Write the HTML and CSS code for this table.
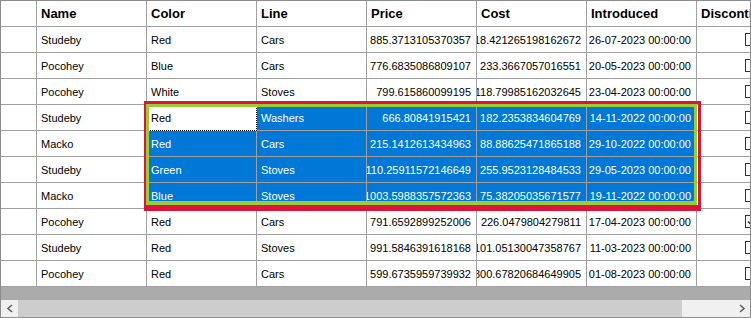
FILE: index.html
```html
<!DOCTYPE html>
<html>
<head>
<meta charset="utf-8">
<link rel="stylesheet" href="styles.css">
</head>
<body>
<div class="dgv">
  <div class="grid">
    <div class="row hdr">
      <div class="c rh"></div>
      <div class="c">Name</div>
      <div class="c">Color</div>
      <div class="c">Line</div>
      <div class="c">Price</div>
      <div class="c">Cost</div>
      <div class="c">Introduced</div>
      <div class="c">Discontinued</div>
    </div>
    <div class="row">
      <div class="c rh"></div><div class="c">Studeby</div><div class="c">Red</div><div class="c">Cars</div>
      <div class="c num"><span>885.3713105370357</span></div><div class="c num"><span>18.421265198162672</span></div>
      <div class="c num"><span>26-07-2023 00:00:00</span></div><div class="c chk"><span class="box"></span></div>
    </div>
    <div class="row">
      <div class="c rh"></div><div class="c">Pocohey</div><div class="c">Blue</div><div class="c">Cars</div>
      <div class="c num"><span>776.6835086809107</span></div><div class="c num"><span>233.3667057016551</span></div>
      <div class="c num"><span>20-05-2023 00:00:00</span></div><div class="c chk"><span class="box"></span></div>
    </div>
    <div class="row">
      <div class="c rh"></div><div class="c">Pocohey</div><div class="c">White</div><div class="c">Stoves</div>
      <div class="c num"><span>799.615860099195</span></div><div class="c num"><span>118.79985162032645</span></div>
      <div class="c num"><span>23-04-2023 00:00:00</span></div><div class="c chk"><span class="box"></span></div>
    </div>
    <div class="row">
      <div class="c rh"></div><div class="c">Studeby</div><div class="c cur">Red</div><div class="c sel">Washers</div>
      <div class="c num sel"><span>666.80841915421</span></div><div class="c num sel"><span>182.2353834604769</span></div>
      <div class="c num sel"><span>14-11-2022 00:00:00</span></div><div class="c chk"><span class="box"></span></div>
    </div>
    <div class="row">
      <div class="c rh"></div><div class="c">Macko</div><div class="c sel">Red</div><div class="c sel">Cars</div>
      <div class="c num sel"><span>215.1412613434963</span></div><div class="c num sel"><span>88.88625471865188</span></div>
      <div class="c num sel"><span>29-10-2022 00:00:00</span></div><div class="c chk"><span class="box"></span></div>
    </div>
    <div class="row">
      <div class="c rh"></div><div class="c">Studeby</div><div class="c sel">Green</div><div class="c sel">Stoves</div>
      <div class="c num sel"><span>110.25911572146649</span></div><div class="c num sel"><span>255.9523128484533</span></div>
      <div class="c num sel"><span>29-05-2023 00:00:00</span></div><div class="c chk"><span class="box"></span></div>
    </div>
    <div class="row">
      <div class="c rh"></div><div class="c">Macko</div><div class="c sel">Blue</div><div class="c sel">Stoves</div>
      <div class="c num sel"><span>1003.5988357572363</span></div><div class="c num sel"><span>75.38205035671577</span></div>
      <div class="c num sel"><span>19-11-2022 00:00:00</span></div><div class="c chk"><span class="box"></span></div>
    </div>
    <div class="row">
      <div class="c rh"></div><div class="c">Pocohey</div><div class="c">Red</div><div class="c">Cars</div>
      <div class="c num"><span>791.6592899252006</span></div><div class="c num"><span>226.0479804279811</span></div>
      <div class="c num"><span>17-04-2023 00:00:00</span></div>
      <div class="c chk"><span class="box"><svg width="11" height="11" viewBox="0 0 11 11"><path d="M2 5.5 L4.5 8 L9 2.5" fill="none" stroke="#222" stroke-width="1.4"/></svg></span></div>
    </div>
    <div class="row">
      <div class="c rh"></div><div class="c">Studeby</div><div class="c">Red</div><div class="c">Stoves</div>
      <div class="c num"><span>991.5846391618168</span></div><div class="c num"><span>101.05130047358767</span></div>
      <div class="c num"><span>11-03-2023 00:00:00</span></div><div class="c chk"><span class="box"></span></div>
    </div>
    <div class="row">
      <div class="c rh"></div><div class="c">Pocohey</div><div class="c">Red</div><div class="c">Cars</div>
      <div class="c num"><span>599.6735959739932</span></div><div class="c num"><span>300.67820684649905</span></div>
      <div class="c num"><span>01-08-2023 00:00:00</span></div><div class="c chk"><span class="box"></span></div>
    </div>
    <div class="mark-red"></div>
    <div class="mark-green"></div>
  </div>
  <div class="empty"></div>
  <div class="hscroll">
    <div class="arrow"><svg width="8" height="9" viewBox="0 0 8 9"><path d="M6 1 L2 4.5 L6 8" fill="none" stroke="#606060" stroke-width="1.6"/></svg></div>
    <div class="thumb"></div>
    <div class="track"></div>
    <div class="arrow"><svg width="8" height="9" viewBox="0 0 8 9"><path d="M2 1 L6 4.5 L2 8" fill="none" stroke="#606060" stroke-width="1.6"/></svg></div>
  </div>
</div>
</body>
</html>
```
FILE: styles.css
```css
html, body {
  margin: 0;
  padding: 0;
  background: #fff;
}
.dgv {
  width: 751px;
  height: 318px;
  box-sizing: border-box;
  border: 1px solid #8c8c8c;
  display: flex;
  flex-direction: column;
  overflow: hidden;
  font-family: "Liberation Sans", Arial, sans-serif;
  font-size: 11px;
  color: #000;
}
.grid {
  position: relative;
  height: 286px;
  overflow: hidden;
  background: #fff;
  flex: none;
}
.row {
  display: flex;
  height: 26px;
}
.c {
  flex: none;
  width: 110px;
  height: 26px;
  box-sizing: border-box;
  border-right: 1px solid #a0a0a0;
  border-bottom: 1px solid #a0a0a0;
  display: flex;
  align-items: center;
  padding: 0 4px 0 4px;
  white-space: nowrap;
  overflow: hidden;
}
.c.rh {
  width: 36px;
}
.hdr .c {
  font-weight: bold;
  font-size: 13px;
  padding-left: 4px;
}
.num {
  justify-content: flex-end;
  padding-right: 5px;
  padding-left: 1px;
}
.num span {
  flex: none;
}
.sel {
  background: #0078d7;
  color: #fff;
}
.cur {
  background: #fff;
  border-right: 1px dotted #000;
  border-bottom: 1px dotted #000;
}
.chk {
  justify-content: center;
}
.box {
  flex: none;
  width: 13px;
  height: 13px;
  box-sizing: border-box;
  border: 1px solid #333;
  background: #fff;
  display: flex;
  align-items: center;
  justify-content: center;
}
.mark-red {
  position: absolute;
  left: 143px;
  top: 100px;
  width: 557px;
  height: 110px;
  box-sizing: border-box;
  border: 3px solid #dc143c;
  border-bottom-width: 6px;
}
.mark-green {
  position: absolute;
  left: 145px;
  top: 103px;
  width: 551px;
  height: 101px;
  box-sizing: border-box;
  border: 3px solid #9acd32;
  border-bottom-width: 4px;
}
.empty {
  flex: 1;
  background: #ababab;
}
.hscroll {
  flex: none;
  height: 17px;
  display: flex;
  background: #f0f0f0;
}
.arrow {
  width: 17px;
  height: 17px;
  display: flex;
  align-items: center;
  justify-content: center;
  flex: none;
}
.thumb {
  width: 664px;
  height: 17px;
  background: #cdcdcd;
  flex: none;
}
.track {
  flex: 1;
}
```
